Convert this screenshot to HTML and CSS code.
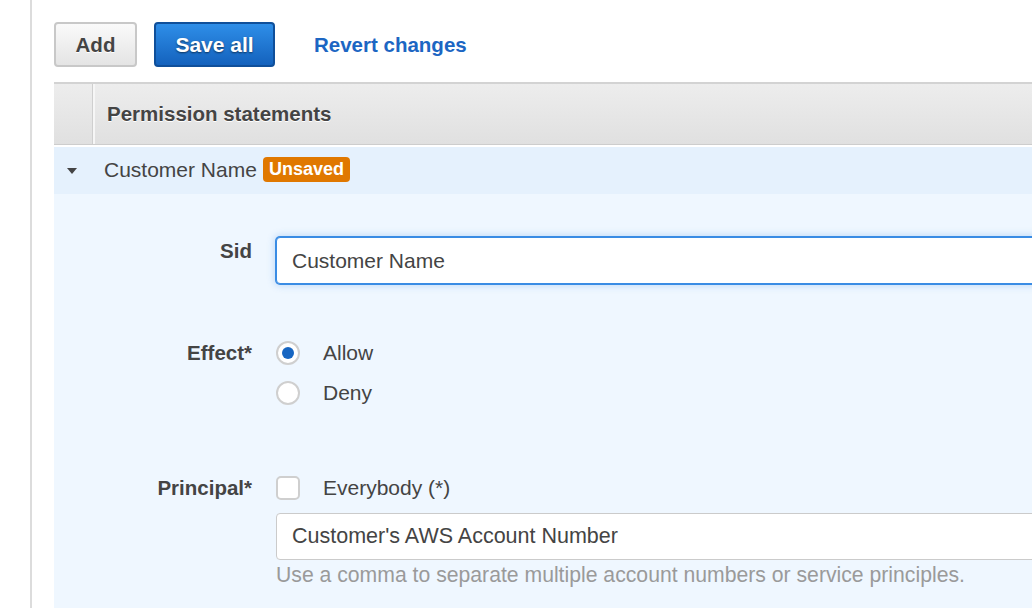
FILE: index.html
```html
<!DOCTYPE html>
<html>
<head>
<meta charset="utf-8">
<link rel="stylesheet" href="styles.css">
</head>
<body>
<div class="page">
  <div class="main">
    <div class="toolbar">
      <button class="btn btn-default">Add</button>
      <button class="btn btn-primary">Save all</button>
      <a class="link" href="#">Revert changes</a>
    </div>
    <div class="table">
      <div class="thead">
        <div class="th-toggle"></div>
        <div class="th-title">Permission statements</div>
      </div>
      <div class="row">
        <div class="row-toggle"><span class="caret"></span></div>
        <div class="row-title">Customer Name <span class="badge">Unsaved</span></div>
      </div>
      <div class="detail">
        <div class="field field-sid">
          <div class="label">Sid</div>
          <div class="control">
            <div class="input input-focus">Customer Name</div>
          </div>
        </div>
        <div class="field field-effect">
          <div class="label">Effect*</div>
          <div class="control options">
            <div class="option"><span class="radio checked"></span><span>Allow</span></div>
            <div class="option"><span class="radio"></span><span>Deny</span></div>
          </div>
        </div>
        <div class="field field-principal">
          <div class="label">Principal*</div>
          <div class="control">
            <div class="option"><span class="checkbox"></span><span>Everybody (*)</span></div>
            <div class="input input-account">Customer's AWS Account Number</div>
            <div class="hint">Use a comma to separate multiple account numbers or service principles.</div>
          </div>
        </div>
      </div>
    </div>
  </div>
</div>
</body>
</html>
```

FILE: styles.css
```css
html, body {
  margin: 0;
  padding: 0;
  background: #fff;
  overflow: hidden;
}
body {
  font-family: "Liberation Sans", Arial, sans-serif;
  color: #444;
  width: 1032px;
  height: 608px;
}
.page {
  margin-left: 30px;
  border-left: 2px solid #dcdcdc;
  padding-left: 22px;
  height: 608px;
  width: 1100px;
}
.main {
  width: 1060px;
}
.toolbar {
  display: flex;
  align-items: center;
  padding-top: 22px;
  height: 45px;
}
.btn {
  font-family: "Liberation Sans", Arial, sans-serif;
  font-weight: bold;
  font-size: 20.5px;
  height: 45px;
  border-radius: 4px;
  padding: 0;
  margin: 0;
  box-sizing: border-box;
  cursor: pointer;
}
.btn-default {
  width: 83px;
  color: #444;
  background: linear-gradient(#fafafa, #e4e4e4);
  border: 2px solid #c8c8c8;
  text-shadow: 0 1px 0 #fff;
}
.btn-primary {
  width: 121px;
  margin-left: 17px;
  color: #fff;
  font-size: 21px;
  background: linear-gradient(#2e8ee8, #1462bd);
  border: 2px solid #0f4f9a;
  text-shadow: 0 1px 2px rgba(0, 0, 0, 0.55);
}
.link {
  margin-left: 39px;
  font-size: 20.5px;
  font-weight: bold;
  color: #1c66c3;
  text-decoration: none;
}
.table {
  margin-top: 15px;
}
.thead {
  display: flex;
  height: 60px;
  border-top: 2px solid #d3d3d3;
  border-bottom: 1px solid #cdcdcd;
  background: linear-gradient(#ededed, #e0e0e0);
}
.th-toggle {
  width: 38px;
  border-right: 1px solid #cfcfcf;
  box-shadow: 2px 0 0 #f6f6f6;
}
.th-title {
  display: flex;
  align-items: center;
  padding-left: 14px;
  font-weight: bold;
  font-size: 20.5px;
  color: #444;
  text-shadow: 0 1px 0 #fff;
}
.row {
  display: flex;
  align-items: center;
  margin-top: 2px;
  height: 47px;
  background: #e5f1fd;
}
.row-toggle {
  width: 36px;
  display: flex;
  justify-content: center;
  align-items: center;
}
.caret {
  width: 0;
  height: 0;
  border-left: 5.5px solid transparent;
  border-right: 5.5px solid transparent;
  border-top: 6px solid #444;
  margin-top: 1px;
}
.row-title {
  display: flex;
  align-items: center;
  margin-left: 14px;
  margin-top: -2px;
  font-size: 21px;
  color: #444;
}
.badge {
  display: inline-block;
  margin-left: 6px;
  height: 25px;
  line-height: 25px;
  padding: 0 6px;
  border-radius: 4px;
  background: #e07800;
  color: #fff;
  font-weight: bold;
  font-size: 18px;
}
.detail {
  background: #eff7ff;
  padding-top: 43px;
  height: 400px;
}
.field {
  display: flex;
  align-items: flex-start;
}
.label {
  width: 198px;
  text-align: right;
  font-weight: bold;
  font-size: 20.5px;
  color: #444;
  flex: none;
}
.control {
  margin-left: 24px;
  width: 800px;
}
.field-sid .label {
  line-height: 28px;
}
.input {
  box-sizing: border-box;
  height: 47px;
  display: flex;
  align-items: center;
  padding-left: 15px;
  font-size: 21px;
  color: #444;
  background: #fff;
  border-radius: 4px;
  border: 1px solid #cbcbcb;
}
.input-focus {
  border-color: #3a8ce4;
  box-shadow: 0 0 0 1px #3a8ce4, 0 0 7px 2px rgba(58, 140, 228, 0.25);
}
.field-effect {
  margin-top: 57px;
}
.field-effect .label,
.field-principal .label {
  line-height: 24px;
}
.options {
  display: flex;
  flex-direction: column;
  gap: 16px;
}
.option {
  display: flex;
  align-items: center;
  height: 24px;
  font-size: 21px;
  color: #444;
}
.radio,
.checkbox {
  box-sizing: border-box;
  width: 24px;
  height: 24px;
  border: 2px solid #cfcfcf;
  background: #fff;
  margin-right: 23px;
  flex: none;
  position: relative;
}
.radio {
  border-radius: 50%;
}
.radio.checked::after {
  content: "";
  position: absolute;
  left: 4px;
  top: 4px;
  width: 12px;
  height: 12px;
  border-radius: 50%;
  background: #1766c2;
}
.checkbox {
  border-radius: 5px;
}
.field-principal {
  margin-top: 71px;
}
.input-account {
  margin-top: 13px;
  font-size: 21.5px;
}
.hint {
  margin-top: 3px;
  font-size: 21.2px;
  line-height: 24px;
  color: #9a9a9a;
}
```
